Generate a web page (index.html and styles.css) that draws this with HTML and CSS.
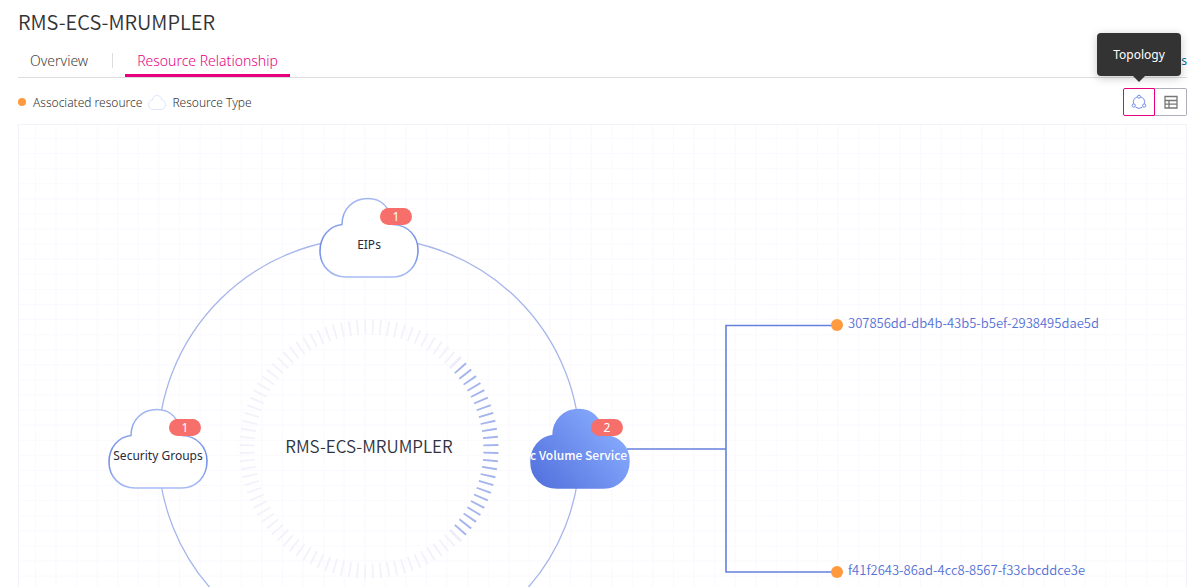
FILE: index.html
```html
<!DOCTYPE html>
<html lang="en">
<head>
<meta charset="utf-8">
<title>RMS-ECS-MRUMPLER</title>
<link rel="stylesheet" href="styles.css">
</head>
<body>
<main class="page">
  <h1 class="title">RMS-ECS-MRUMPLER</h1>
  <nav class="tabs">
    <a class="tab" href="#overview">Overview</a>
    <span class="tab-divider"></span>
    <a class="tab tab-active" href="#relationship" aria-current="page">Resource Relationship</a>
    <a class="tab-extra" href="#more">s</a>
  </nav>
  <div class="toolbar">
    <div class="legend">
      <span class="legend-dot"></span>
      <span>Associated resource</span>
      <svg class="legend-cloud" viewBox="0 0 18 15" aria-hidden="true">
        <path d="M4.500 5C4.500 2 6.500.5 9 .5C11.500.5 13.500 2 13.500 5C16 5.200 17.500 7 17.500 9.500C17.500 12.500 15.500 14.500 13 14.500H5C2.500 14.500.5 12.500.5 9.500C.5 7 2 5.200 4.500 5Z"/>
      </svg>
      <span>Resource Type</span>
    </div>
    <div class="views">
      <button class="view view-active" type="button" aria-label="Show topology">
        <svg class="icon" viewBox="0 0 16 16" aria-hidden="true">
          <path d="M6.200 2.900A5.700 5.700 0 0 0 2.400 9.600M9.800 2.900A5.700 5.700 0 0 1 13.600 9.600M4.600 13.200A5.800 5.800 0 0 0 11.400 13.200"/>
          <circle cx="8" cy="2.700" r="1.500"/><circle cx="2.800" cy="11.500" r="1.600"/><circle cx="13.200" cy="11.500" r="1.600"/>
        </svg>
      </button>
      <button class="view" type="button" aria-label="Show table">
        <svg class="icon icon-table" viewBox="0 0 16 16" aria-hidden="true">
          <path d="M2 2.500h12v11.500H2zM2 6.500h12M2 10.200h12M6 6.500V14"/>
        </svg>
      </button>
      <div class="tooltip" role="tooltip">Topology</div>
    </div>
  </div>
  <section class="canvas">
    <svg class="graph" width="100%" height="100%">
      <defs>
        <pattern id="grid" x="16" y="13" width="20.580" height="15.090" patternUnits="userSpaceOnUse">
          <path class="grid-line" d="M.5 0V16M0 .5H21"/>
        </pattern>
        <linearGradient id="fill" x1="0" y1="1" x2="1" y2=".3">
          <stop offset="0" stop-color="#516edb"/><stop offset="1" stop-color="#89adff"/>
        </linearGradient>
        <linearGradient id="edge" x1="0" y1="0" x2="0" y2="1">
          <stop offset="0" stop-color="#a3b6f4"/><stop offset=".35" stop-color="#8ba2ed"/>
          <stop offset=".65" stop-color="#6d8ae5"/><stop offset="1" stop-color="#a9bbf6"/>
        </linearGradient>
        <path id="cloud" d="M22 26.500C22 11 33 .5 48 .5C60 .5 70 8 73 26.500C88 27 98 38 98 52C98 68 87 79 73 79H26C11 79 0 68 0 53C0 39 9 28 22 26.500Z"/>
      </defs>
      <rect width="100%" height="100%" fill="url(#grid)"/>
      <circle class="orbit" cx="350" cy="324" r="211"/>
      <circle class="ticks" cx="350" cy="324" r="122" pathLength="100"/>
      <path class="ticks ticks-on" pathLength="24" d="M438.900 240.500A122 122 0 0 1 438.900 407.500"/>
      <path class="tick-end" d="M431.300 242.700l10.600-10.600M431.300 405.300l10.600 10.600"/>
      <text class="center-label" x="350" y="328">RMS-ECS-MRUMPLER</text>

      <g transform="translate(301 73)">
        <use class="cloud" href="#cloud"/>
        <text class="cloud-label" x="49" y="51">EIPs</text>
        <rect class="badge" x="60" y="10" width="32" height="17" rx="8.500"/>
        <text class="badge-label" x="76" y="23">1</text>
      </g>
      <g transform="translate(90 284)">
        <use class="cloud" href="#cloud"/>
        <text class="cloud-label" x="49" y="51">Security Groups</text>
        <rect class="badge" x="60" y="10" width="32" height="17" rx="8.500"/>
        <text class="badge-label" x="76" y="23">1</text>
      </g>
      <path class="link" d="M608 324H707M818 200.500H707V447H818"/>
      <g transform="translate(512 284)">
        <use class="cloud cloud-on" href="#cloud"/>
        <text class="cloud-label cloud-label-on" x="96" y="51">Elastic Volume Service</text>
        <rect class="badge" x="60" y="10" width="32" height="17" rx="8.500"/>
        <text class="badge-label" x="76" y="23">2</text>
      </g>
      <circle class="resource" cx="818" cy="200" r="6"/>
      <text class="resource-label" x="829" y="203">307856dd-db4b-43b5-b5ef-2938495dae5d</text>
      <circle class="resource" cx="818" cy="447" r="6"/>
      <text class="resource-label" x="829" y="450">f41f2643-86ad-4cc8-8567-f33cbcddce3e</text>
    </svg>
  </section>
</main>
</body>
</html>
```
FILE: styles.css
```css
* { box-sizing: border-box; }
body {
  margin: 0;
  background: #fff;
  color: #333;
  font-family: "Noto Sans", "Open Sans", sans-serif;
  font-size: 12px;
}
.page {
  display: flex;
  flex-direction: column;
  height: 100vh;
  padding: 8px 15px 0 18px;
  overflow: hidden;
}
.title {
  margin: 0;
  font-family: "Noto Sans CJK SC", "Noto Sans", sans-serif;
  font-size: 20px;
  font-weight: 350;
  line-height: 28px;
}
.tabs {
  display: flex;
  align-items: center;
  height: 42px;
  padding-top: 8px;
  border-bottom: 1px solid #dcdde0;
}
.tab {
  display: flex;
  align-items: center;
  height: 33px;
  padding: 3px 12px 0 12px;
  border-bottom: 3px solid transparent;
  color: #444;
  font-size: 14px;
  font-weight: 300;
  text-decoration: none;
}
.tab-divider {
  width: 1px;
  height: 15px;
  margin: 0 12px;
  background: #dcdde0;
}
.tab-active {
  border-bottom-color: #e6007e;
  color: #e6007e;
}
.tab-extra {
  margin-left: auto;
  color: #00739d;
  text-decoration: none;
}
.toolbar {
  display: flex;
  align-items: center;
  justify-content: space-between;
  height: 46px;
  padding-top: 2px;
}
.legend {
  display: flex;
  align-items: center;
  font-weight: 300;
}
.legend-dot {
  width: 8px;
  height: 8px;
  margin-right: 7px;
  border-radius: 50%;
  background: #ff9a3e;
}
.legend-cloud {
  width: 18px;
  height: 15px;
  margin: 0 6px;
  fill: #fff;
  stroke: #dfe5fb;
}
.views {
  position: relative;
  display: flex;
}
.view {
  display: flex;
  align-items: center;
  justify-content: center;
  width: 32px;
  height: 28px;
  padding: 0;
  border: 1px solid #adb0b8;
  border-left: 0;
  border-radius: 0 2px 2px 0;
  background: #fff;
}
.view-active {
  border: 1px solid #e6007e;
  border-radius: 2px 0 0 2px;
}
.icon {
  width: 16px;
  height: 16px;
  fill: none;
  stroke: #6f8be8;
}
.icon-table {
  stroke: #777;
  stroke-width: 1.3;
}
.tooltip {
  position: absolute;
  right: 6px;
  bottom: 40px;
  width: 84px;
  border-radius: 4px;
  background: #333;
  box-shadow: 0 2px 10px rgba(0, 0, 0, .22);
  color: #fff;
  line-height: 43px;
  text-align: center;
}
.tooltip::after {
  content: "";
  position: absolute;
  top: 100%;
  left: 50%;
  margin-left: -6px;
  border: 6px solid transparent;
  border-top-color: #333;
  border-bottom: 0;
}
.canvas {
  flex: 1;
  min-height: 0;
  border: 1px solid #f2f3f8;
  border-bottom: 0;
  overflow: hidden;
}
.graph { display: block; }
.grid-line { fill: none; stroke: #f9f9ff; }
.orbit { fill: none; stroke: #a7b6ea; stroke-width: 1.3; }
.ticks {
  fill: none;
  stroke: #f2f2fb;
  stroke-width: 15;
  stroke-dasharray: .24 .76;
  stroke-dashoffset: -.38;
}
.ticks-on { stroke: #a4b5ee; }
.tick-end { stroke: #e6e6fa; stroke-width: 3; stroke-dasharray: 1 1; }
.center-label {
  fill: #30333f;
  font-family: "Noto Sans CJK SC", "Noto Sans", sans-serif;
  font-size: 17px;
  font-weight: 350;
  text-anchor: middle;
}
.cloud { fill: #fff; stroke: url(#edge); stroke-width: 1.5; }
.cloud-on { fill: url(#fill); stroke: url(#fill); }
.cloud-label { fill: #252b3a; font-size: 12px; text-anchor: middle; }
.cloud-label-on {
  fill: #fff;
  font-family: "Noto Sans CJK SC", "Noto Sans", sans-serif;
  font-weight: 500;
  text-anchor: end;
}
.badge { fill: #f66f6a; }
.badge-label { fill: #fff; font-size: 12px; text-anchor: middle; }
.link { fill: none; stroke: #6581dc; stroke-width: 1.6; }
.resource { fill: #ff9a3e; }
.resource-label {
  fill: #5671d6;
  font-family: "Noto Sans CJK SC", "Noto Sans", sans-serif;
  font-size: 13px;
  font-weight: 350;
}
```
